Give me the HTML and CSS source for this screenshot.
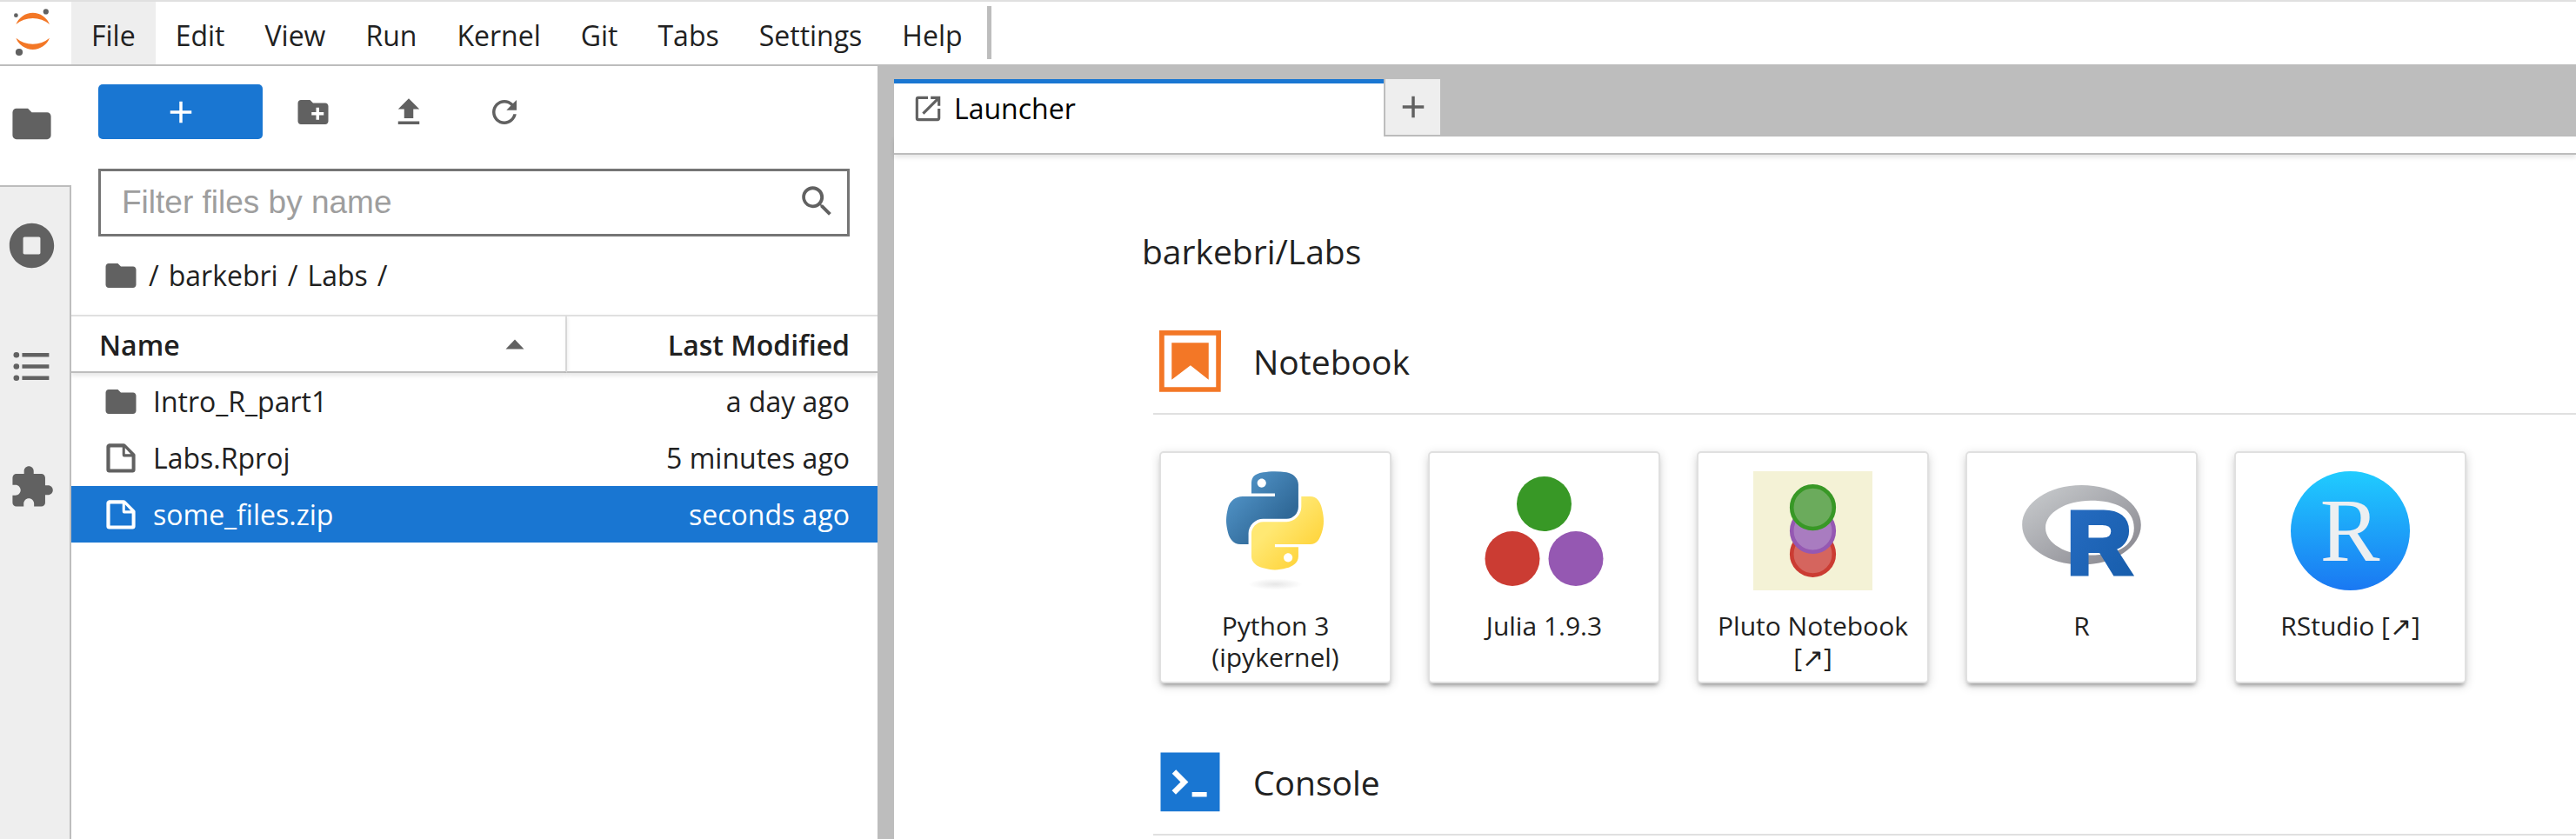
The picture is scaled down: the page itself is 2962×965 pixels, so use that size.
FILE: index.html
```html
<!DOCTYPE html>
<html lang="en">
<head>
<meta charset="utf-8">
<title>JupyterLab</title>
<link rel="stylesheet" href="styles.css">
</head>
<body>
<svg class="defs" aria-hidden="true">
  <symbol id="i-folder" viewBox="0 0 24 24"><path d="M10 4H4c-1.1 0-1.99.9-1.99 2L2 18c0 1.1.9 2 2 2h16c1.1 0 2-.9 2-2V8c0-1.1-.9-2-2-2h-8l-2-2z"/></symbol>
  <symbol id="i-file" viewBox="0 0 22 22"><path d="M19.3 8.2l-5.5-5.5c-.3-.3-.7-.5-1.2-.5H3.9c-.8.1-1.6.9-1.6 1.8v14.1c0 .9.7 1.6 1.6 1.6h14.2c.9 0 1.6-.7 1.6-1.6V9.4c.1-.5-.1-.9-.4-1.2zm-5.8-3.3l3.4 3.6h-3.4V4.9zm3.9 12.7H4.7c-.1 0-.2 0-.2-.2V4.7c0-.2.1-.3.2-.3h7.2v4.4s0 .8.3 1.1c.3.3 1.1.3 1.1.3h4.3v7.2s-.1.2-.2.2z"/></symbol>
  <symbol id="i-plus" viewBox="0 0 24 24"><path d="M19 13h-6v6h-2v-6H5v-2h6V5h2v6h6v2z"/></symbol>
</svg>

<header class="top">
  <svg class="logo" viewBox="0 0 82 72" aria-label="Jupyter">
    <path fill="#f37726" d="M18.4 26A20.7 20.7 0 0 1 57 26A30.1 30.1 0 0 0 18.4 26zM18.4 41.7A20.7 20.7 0 0 0 57 41.7A30.1 30.1 0 0 1 18.4 41.7z"/>
    <g fill="#616161"><circle cx="52.8" cy="11.4" r="3.1"/><circle cx="18.4" cy="15.7" r="2.4"/><circle cx="22" cy="58" r="4.1"/></g>
  </svg>
  <nav class="menu">
    <button class="menu-item active">File</button>
    <button class="menu-item">Edit</button>
    <button class="menu-item">View</button>
    <button class="menu-item">Run</button>
    <button class="menu-item">Kernel</button>
    <button class="menu-item">Git</button>
    <button class="menu-item">Tabs</button>
    <button class="menu-item">Settings</button>
    <button class="menu-item">Help</button>
  </nav>
  <span class="menu-end"></span>
</header>

<div class="main">
  <nav class="activity">
    <button class="activity-tab current" aria-label="File Browser"><svg class="icon-lg"><use href="#i-folder"/></svg></button>
    <button class="activity-tab" aria-label="Running"><svg class="icon-lg" viewBox="0 0 512 512"><path d="M256 8C119 8 8 119 8 256s111 248 248 248 248-111 248-248S393 8 256 8zm96 328c0 8.800-7.200 16-16 16H176c-8.800 0-16-7.200-16-16V176c0-8.800 7.200-16 16-16h160c8.800 0 16 7.200 16 16v160z"/></svg></button>
    <button class="activity-tab" aria-label="Table of Contents"><svg class="icon-lg" viewBox="0 0 24 24"><path d="M7 5h14v2H7zM7 11h14v2H7zM7 17h14v2H7z"/><circle cx="4" cy="6" r="1.500"/><circle cx="4" cy="12" r="1.500"/><circle cx="4" cy="18" r="1.500"/></svg></button>
    <button class="activity-tab" aria-label="Extensions"><svg class="icon-lg" viewBox="0 0 24 24"><path d="M20.500 11H19V7c0-1.100-.9-2-2-2h-4V3.500C13 2.120 11.880 1 10.500 1S8 2.120 8 3.500V5H4c-1.100 0-1.990.9-1.990 2v3.800H3.500c1.490 0 2.700 1.210 2.700 2.700s-1.210 2.700-2.700 2.700H2V20c0 1.100.9 2 2 2h3.800v-1.500c0-1.490 1.210-2.700 2.700-2.700 1.490 0 2.700 1.210 2.700 2.700V22H17c1.100 0 2-.9 2-2v-4h1.500c1.380 0 2.500-1.120 2.500-2.500S21.880 11 20.500 11z"/></svg></button>
  </nav>

  <aside class="browser">
    <div class="toolbar">
      <button class="new-btn" aria-label="New Launcher"><svg class="icon"><use href="#i-plus"/></svg></button>
      <button class="tool" aria-label="New Folder"><svg class="icon" viewBox="0 0 24 24"><path d="M20 6h-8l-2-2H4c-1.110 0-1.990.89-1.990 2L2 18c0 1.110.89 2 2 2h16c1.110 0 2-.89 2-2V8c0-1.110-.89-2-2-2zm-1 8h-3v3h-2v-3h-3v-2h3V9h2v3h3v2z"/></svg></button>
      <button class="tool" aria-label="Upload Files"><svg class="icon" viewBox="0 0 24 24"><path d="M9 16h6v-6h4l-7-7-7 7h4zm-4 2h14v2H5z"/></svg></button>
      <button class="tool" aria-label="Refresh"><svg class="icon" viewBox="0 0 18 18"><path d="M9 13.500c-2.490 0-4.500-2.010-4.500-4.500S6.510 4.500 9 4.500c1.240 0 2.360.52 3.170 1.330L10 8h5V3l-1.760 1.760C12.150 3.680 10.660 3 9 3 5.690 3 3.010 5.690 3.010 9S5.690 15 9 15c2.970 0 5.430-2.160 5.900-5h-1.520c-.46 2-2.240 3.500-4.380 3.500z"/></svg></button>
    </div>
    <label class="filter">
      <input class="filter-input" type="text" placeholder="Filter files by name" aria-label="Filter files by name">
      <svg class="icon" viewBox="0 0 18 18"><path d="M12.100,10.900h-0.700l-0.200-0.200c0.800-0.900,1.300-2.200,1.300-3.500c0-3-2.400-5.400-5.400-5.400S1.800,4.200,1.800,7.100s2.400,5.400,5.400,5.400c1.300,0,2.500-0.500,3.500-1.300l0.200,0.200v0.700l4.100,4.100l1.200-1.200L12.100,10.900z M7.100,10.900c-2.100,0-3.700-1.700-3.700-3.700s1.700-3.700,3.700-3.700s3.700,1.700,3.700,3.700S9.200,10.900,7.100,10.900z"/></svg>
    </label>
    <div class="crumbs">
      <svg class="icon"><use href="#i-folder"/></svg>
      <span>/</span><a href="#">barkebri</a><span>/</span><a href="#">Labs</a><span>/</span>
    </div>
    <table class="files">
      <thead>
        <tr>
          <th class="col-name"><span class="th-inner">Name<svg class="icon" viewBox="0 0 24 24"><path d="M6 14.500l6-6.200 6 6.200z"/></svg></span></th>
          <th class="col-date">Last Modified</th>
        </tr>
      </thead>
      <tbody>
        <tr><td><span class="file"><svg class="icon"><use href="#i-folder"/></svg>Intro_R_part1</span></td><td class="col-date">a day ago</td></tr>
        <tr><td><span class="file"><svg class="icon"><use href="#i-file"/></svg>Labs.Rproj</span></td><td class="col-date">5 minutes ago</td></tr>
        <tr class="selected"><td><span class="file"><svg class="icon"><use href="#i-file"/></svg>some_files.zip</span></td><td class="col-date">seconds ago</td></tr>
      </tbody>
    </table>
  </aside>

  <div class="splitter"></div>

  <main class="dock">
    <div class="tabs">
      <button class="tab"><svg class="icon-sm" viewBox="0 0 24 24"><path d="M19 19H5V5h7V3H5a2 2 0 0 0-2 2v14a2 2 0 0 0 2 2h14c1.100 0 2-.9 2-2v-7h-2v7zM14 3v2h3.590l-9.830 9.830 1.410 1.410L19 6.410V10h2V3h-7z"/></svg>Launcher</button>
      <button class="tab-add" aria-label="New tab"><svg class="icon"><use href="#i-plus"/></svg></button>
    </div>
    <div class="tab-strip"></div>
    <div class="launcher">
      <p class="cwd">barkebri/Labs</p>
      <section class="section">
        <h2 class="section-head">
          <svg class="icon-xl" viewBox="0 0 22 22"><path fill="#f37726" d="M18.700 3.300v15.400H3.300V3.300h15.400m1.500-1.500H1.800v18.300h18.300l.1-18.300zM16.500 16.500l-5.400-4.300-5.600 4.300v-11h11z"/></svg>
          Notebook
        </h2>
        <div class="cards">
          <button class="card">
            <svg class="kernel" viewBox="0 0 137 137">
              <defs>
                <linearGradient id="py-blue" x1="0" y1="0" x2=".75" y2=".7"><stop offset="0" stop-color="#5a9fd4"/><stop offset="1" stop-color="#306998"/></linearGradient>
                <linearGradient id="py-yellow" x1=".85" y1=".75" x2=".4" y2=".3"><stop offset="0" stop-color="#ffd43b"/><stop offset="1" stop-color="#ffe873"/></linearGradient>
                <radialGradient id="py-shadow"><stop offset="0" stop-color="#b8b8b8" stop-opacity=".35"/><stop offset="1" stop-color="#b8b8b8" stop-opacity="0"/></radialGradient>
              </defs>
              <ellipse cx="68.500" cy="130" rx="31" ry="6.500" fill="url(#py-shadow)"/>
              <g transform="translate(-2 -2) scale(1.094)">
                <path fill="url(#py-blue)" d="M63.391 1.988c-4.222.02-8.252.379-11.800 1.007-10.450 1.846-12.346 5.710-12.346 12.837v9.411h24.693v3.137H29.977c-7.176 0-13.460 4.313-15.426 12.521-2.268 9.405-2.368 15.275 0 25.096 1.755 7.311 5.947 12.519 13.124 12.519h8.491V67.234c0-8.151 7.051-15.340 15.426-15.340h24.665c6.866 0 12.346-5.654 12.346-12.548V15.833c0-6.693-5.646-11.720-12.346-12.837-4.244-.706-8.645-1.027-12.866-1.008zM50.037 9.557c2.550 0 4.634 2.117 4.634 4.721 0 2.593-2.083 4.690-4.634 4.690-2.560 0-4.633-2.097-4.633-4.690-.001-2.604 2.073-4.721 4.633-4.721z"/>
                <path fill="url(#py-yellow)" d="M91.682 28.380v10.966c0 8.500-7.208 15.655-15.426 15.655H51.591c-6.756 0-12.346 5.783-12.346 12.549v23.515c0 6.691 5.818 10.628 12.346 12.547 7.816 2.297 15.312 2.713 24.665 0 6.216-1.801 12.346-5.423 12.346-12.547v-9.412H63.938v-3.138h37.012c7.176 0 9.852-5.005 12.348-12.519 2.578-7.735 2.467-15.174 0-25.096-1.774-7.145-5.161-12.521-12.348-12.521h-9.268zM77.809 87.927c2.561 0 4.634 2.097 4.634 4.692 0 2.602-2.074 4.719-4.634 4.719-2.550 0-4.633-2.117-4.633-4.719 0-2.595 2.083-4.692 4.633-4.692z"/>
              </g>
            </svg>
            <span class="card-label">Python 3 (ipykernel)</span>
          </button>
          <button class="card">
            <svg class="kernel" viewBox="0 0 137 137"><circle cx="68.500" cy="37.500" r="31.500" fill="#389826"/><circle cx="32" cy="100.500" r="31.500" fill="#cb3c33"/><circle cx="105" cy="100.500" r="31.500" fill="#9558b2"/></svg>
            <span class="card-label">Julia 1.9.3</span>
          </button>
          <button class="card">
            <svg class="kernel" viewBox="0 0 137 137"><path fill="#f4f2d6" d="M0 0h137v137H0z"/><g stroke-width="4.600"><circle cx="68.500" cy="95.300" r="24.300" fill="#d5655e" stroke="#cb3c33"/><circle cx="68.500" cy="68.500" r="24.300" fill="#a97cc0" stroke="#9558b2"/><circle cx="68.500" cy="41.700" r="24.300" fill="#6bab5c" stroke="#389826"/></g></svg>
            <span class="card-label">Pluto Notebook [↗]</span>
          </button>
          <button class="card">
            <svg class="kernel" viewBox="0 0 137 137">
              <defs>
                <linearGradient id="r-ring" x1="0" y1="0" x2="1" y2="1"><stop offset="0" stop-color="#cbced0"/><stop offset="1" stop-color="#84838b"/></linearGradient>
                <linearGradient id="r-blue" x1="0" y1="0" x2="1" y2="1"><stop offset="0" stop-color="#276dc3"/><stop offset="1" stop-color="#165caa"/></linearGradient>
              </defs>
              <path transform="translate(0 15.400) scale(.1895)" fill="url(#r-ring)" fill-rule="evenodd" d="M361.453 485.937C162.329 485.937.906 377.828.906 244.469.906 111.109 162.329 3 361.453 3 560.578 3 722 111.109 722 244.469c0 133.359-161.422 241.468-360.547 241.468zM416.641 97.406c-151.352 0-274.047 73.908-274.047 165.078s122.695 165.078 274.047 165.078c151.351 0 263.046-50.529 263.046-165.078 0-114.513-111.695-165.078-263.046-165.078z"/>
              <text x="52" y="118" class="r-letter" fill="url(#r-blue)" stroke="url(#r-blue)">R</text>
            </svg>
            <span class="card-label">R</span>
          </button>
          <button class="card">
            <svg class="kernel" viewBox="0 0 137 137">
              <defs><linearGradient id="rs" x1="0" y1="0" x2="0" y2="1"><stop offset="0" stop-color="#20ccff"/><stop offset="1" stop-color="#1a78f2"/></linearGradient></defs>
              <circle cx="68.500" cy="68.500" r="68.500" fill="url(#rs)"/>
              <text x="68" y="103" class="rs-letter">R</text>
            </svg>
            <span class="card-label">RStudio [↗]</span>
          </button>
        </div>
      </section>
      <section class="section">
        <h2 class="section-head">
          <svg class="icon-xl" viewBox="0 0 200 200"><path fill="#1976d2" d="M20 19.800h160v159.900H20z"/><path fill="#fff" d="M105 127.300h40v12.800h-40zM51.100 77L74 99.900l-23.300 23.300 10.500 10.500 23.300-23.300L95 99.900 84.500 89.400 61.600 66.500z"/></svg>
          Console
        </h2>
      </section>
    </div>
  </main>
</div>
</body>
</html>
```

FILE: styles.css
```css
* { box-sizing: border-box; }

body {
  margin: 0;
  height: 100vh;
  display: flex;
  flex-direction: column;
  overflow: hidden;
  background: #fff;
  color: #212121;
  font-family: "Segoe UI", "Open Sans", sans-serif;
  font-size: 32px;
  line-height: 44px;
}

button {
  margin: 0;
  padding: 0;
  border: 0;
  background: none;
  color: inherit;
  font: inherit;
}

svg { display: block; flex: none; fill: #616161; }
.defs { position: absolute; width: 0; height: 0; }
.icon-sm { width: 38px; height: 38px; }
.icon { width: 42px; height: 42px; }
.icon-lg { width: 53px; height: 53px; }
.icon-xl { width: 85px; height: 85px; }

/* Menu bar */
.top {
  display: flex;
  flex: none;
  height: 76px;
  border-top: 2px solid #e0e0e0;
  border-bottom: 2px solid #bdbdbd;
}
.logo { width: 82px; height: 72px; }
.menu { display: flex; }
.menu-item { padding: 5px 23px 0; }
.menu-item.active { background: #eee; }
.menu-end { width: 5px; margin: 5px 0 6px 5px; background: #bdbdbd; }

.main { display: flex; flex: 1; min-height: 0; }

/* Activity bar */
.activity {
  display: flex;
  flex-direction: column;
  flex: none;
  width: 82px;
  border-right: 2px solid #bdbdbd;
  background: #eee;
}
.activity-tab {
  display: flex;
  align-items: center;
  height: 139px;
  padding: 0 0 4px 10px;
}
.activity-tab.current {
  margin-right: -2px;
  border-bottom: 2px solid #bdbdbd;
  background: #fff;
}

/* File browser */
.browser { flex: none; width: 927px; overflow: hidden; }
.toolbar {
  display: flex;
  align-items: center;
  margin: 21px 31px 34px;
}
.new-btn {
  display: flex;
  align-items: center;
  justify-content: center;
  width: 189px;
  height: 63px;
  margin-right: 3px;
  border-radius: 5px;
  background: #1976d2;
}
.new-btn svg { fill: #fff; }
.tool { display: flex; justify-content: center; width: 110px; }
.filter {
  display: flex;
  margin: 0 32px 0 31px;
  height: 78px;
  padding: 13px 14px 0 24px;
  border: 3px solid #757575;
}
.filter-input {
  flex: 1;
  height: 46px;
  padding: 0;
  border: 0;
  outline: 0;
  font: 37px "Liberation Sans", Arial, sans-serif;
}
.filter-input::placeholder { color: #9e9e9e; }
.crumbs {
  display: flex;
  align-items: center;
  gap: 11px;
  height: 90px;
  padding-left: 36px;
}
.crumbs a { color: inherit; text-decoration: none; }

.files { width: 100%; border-collapse: separate; border-spacing: 0; }
.files th {
  height: 67px;
  padding: 2px 0 0 32px;
  border-top: 2px solid #e0e0e0;
  border-bottom: 2px solid #bdbdbd;
  box-shadow: 0 3px 5px rgba(0, 0, 0, .1);
  font-weight: 600;
  text-align: left;
}
.files td { height: 65px; padding: 0 0 0 36px; }
.files .col-name { width: 570px; border-right: 2px solid #e0e0e0; }
.files .col-date { padding-right: 32px; text-align: right; }
.th-inner {
  display: flex;
  align-items: center;
  justify-content: space-between;
  padding-right: 37px;
}
.file { display: flex; align-items: center; gap: 16px; }
.selected { background: #1976d2; color: #fff; }
.selected svg { fill: #fff; }

.splitter { flex: none; width: 19px; background: #bdbdbd; }

/* Dock panel */
.dock { flex: 1; min-width: 0; }
.tabs {
  display: flex;
  height: 81px;
  padding-top: 15px;
  background: #bdbdbd;
}
.tab {
  display: flex;
  align-items: center;
  gap: 11px;
  width: 563px;
  padding: 0 20px 4px;
  border-top: 5px solid #1976d2;
  background: #fff;
  color: #000;
}
.tab-add {
  display: flex;
  align-items: center;
  justify-content: center;
  width: 65px;
  margin-bottom: 2px;
  border-left: 2px solid #bdbdbd;
  background: #eee;
}
.tab-strip {
  height: 21px;
  border-bottom: 2px solid #bdbdbd;
  box-shadow: 0 3px 5px rgba(0, 0, 0, .1);
}

.launcher { padding: 83px 0 0 285px; }
.cwd { margin: 0; font-size: 39px; line-height: 56px; }
.section { margin: 56px 0 0 13px; }
.section + .section { margin-top: 71px; }
.section-head {
  display: flex;
  align-items: center;
  gap: 30px;
  margin: 0;
  padding-bottom: 17px;
  border-bottom: 2px solid #e0e0e0;
  font-size: 39px;
  font-weight: 400;
}
.cards { display: flex; flex-wrap: wrap; gap: 42px; padding: 42px 0 0 7px; }
.card {
  display: flex;
  flex-direction: column;
  align-items: center;
  width: 267px;
  height: 267px;
  padding-top: 21px;
  border: 2px solid #e0e0e0;
  border-radius: 5px;
  background: #fff;
  box-shadow: 0 5px 5px -3px rgba(0, 0, 0, .35), 0 3px 12px rgba(0, 0, 0, .16);
}
.kernel { width: 137px; height: 137px; overflow: visible; }
.card-label {
  width: 230px;
  margin-top: 23px;
  font-size: 30px;
  line-height: 36px;
}
.r-letter { font: bold 102px "Liberation Sans", Arial, sans-serif; stroke-width: 6px; }
.rs-letter { font: 103px "Liberation Serif", serif; text-anchor: middle; fill: #eceff1; }
```
